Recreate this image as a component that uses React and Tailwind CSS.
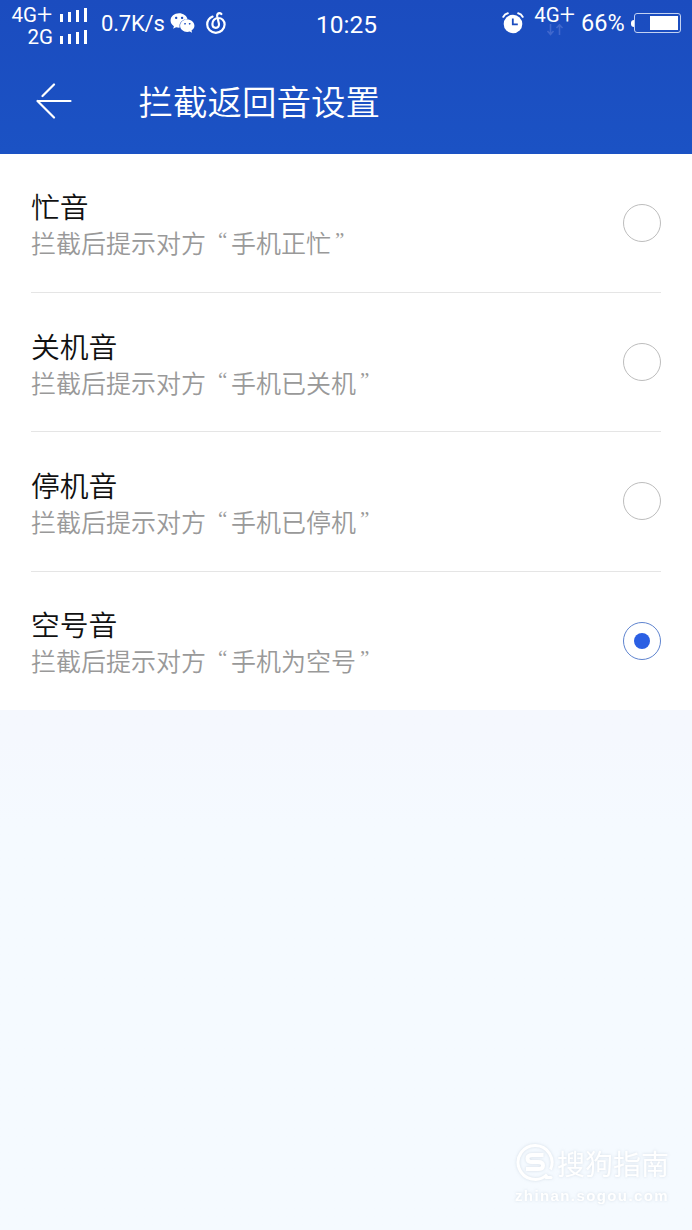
import React, { useState } from "react";
import { FaWeixin } from "react-icons/fa";

const options = [
    { id: "busy", name: "忙音", tone: "手机正忙" },
    { id: "off", name: "关机音", tone: "手机已关机" },
    { id: "stopped", name: "停机音", tone: "手机已停机" },
    { id: "empty", name: "空号音", tone: "手机为空号" },
];

function SignalBars() {
    return (
        <div className="flex h-[14px] items-end gap-[5px]">
            <span className="h-2 w-[3px] bg-white" />
            <span className="h-[10px] w-[3px] bg-white" />
            <span className="h-3 w-[3px] bg-white" />
            <span className="h-[14px] w-[3px] bg-white" />
        </div>
    );
}

function NetworkType() {
    return (
        <span className="flex h-5 items-center text-[20.5px] leading-5">
            4G<span className="w-4 text-[27px] leading-5 font-light">+</span>
        </span>
    );
}

function MusicIcon() {
    return (
        <svg className="h-[22px] w-5" viewBox="0 0 20 22" fill="none" stroke="#fff" strokeWidth="2.2" strokeLinecap="round">
            <path d="M6.6 4.6C2.8 6.4 1.2 9.6 1.2 12.4C1.2 17 5 20.8 9.8 20.8S18.6 17 18.6 12.6C18.6 8.6 15.6 6 12.4 6C8.8 6 6.4 8.8 6.4 12C6.4 14.4 7.8 15.8 9.8 15.8C12.2 15.8 13.4 13.8 12.9 11.6L11.2 4.4C10.8 2.2 12 1.2 13.4 1.2Q14.6 1.2 15.4 2" />
        </svg>
    );
}

function AlarmIcon() {
    return (
        <svg className="h-[22px] w-[22px]" viewBox="0 0 22 22" fill="none">
            <circle cx="11" cy="12" r="9.3" fill="#fff" />
            <path d="M1.3 4.8Q2.6 2 5.8 1.3M20.7 4.8Q19.4 2 16.2 1.3" stroke="#fff" strokeWidth="2" strokeLinecap="round" />
            <path d="M10.8 6.5V12.4H15.8" stroke="#1b4cbf" strokeWidth="1.8" />
        </svg>
    );
}

function Battery() {
    return (
        <div className="flex items-center">
            <span className="h-[7px] w-[3px] rounded-l-sm bg-white" />
            <div className="flex h-5 w-[47px] justify-end rounded-[3px] border border-[#c3d2f2] p-[2px]">
                <span className="h-full w-[28px] bg-white" />
            </div>
        </div>
    );
}

function StatusBar() {
    return (
        <div className="flex h-12 font-[Roboto,sans-serif] leading-none text-white">
            <div className="flex w-[87px] flex-col items-end pt-1">
                <div className="flex h-[22px] items-center gap-[7px]">
                    <NetworkType />
                    <SignalBars />
                </div>
                <div className="flex h-[22px] items-center gap-[7px] text-[20.5px]">
                    <span>2G</span>
                    <SignalBars />
                </div>
            </div>
            <span className="ml-[14px] w-[69px] pt-[13px] text-[22px] tracking-[-0.2px]">0.7K/s</span>
            <FaWeixin className="mt-[10px] h-[26px] w-[25px]" />
            <div className="ml-[11px] w-[21px] pt-[12px]">
                <MusicIcon />
            </div>
            <span className="ml-[89px] w-[70px] pt-[13px] text-[24.5px]">10:25</span>
            <div className="ml-[116px] pt-[12px]">
                <AlarmIcon />
            </div>
            <div className="ml-[9px] flex w-[44px] flex-col items-center pt-[5px]">
                <NetworkType />
                <svg className="-mt-px h-3 w-[18px]" viewBox="0 0 18 12" fill="none" stroke="#4067cc" strokeWidth="1.6">
                    <path d="M4.5 0V10M1.5 7L4.5 10.5L7.5 7M13.5 11V1M10.5 4L13.5 .8L16.5 4" />
                </svg>
            </div>
            <span className="ml-[4px] w-[50px] pt-[12px] text-[23.5px]">66%</span>
            <div className="pt-[13px]">
                <Battery />
            </div>
        </div>
    );
}

function OptionRow({ option, checked, last, onSelect }) {
    return (
        <button
            type="button"
            onClick={() => onSelect(option.id)}
            className={`flex w-full items-center justify-between text-left ${
                last ? "h-[138.5px]" : "h-[139.4px] border-b border-[#e5e5e5]"
            }`}
        >
            <div className="pt-px">
                <div className="text-[28.8px] leading-[38px] font-[350] text-[#111]">{option.name}</div>
                <div className="flex text-[25px] leading-[34px] font-[350] text-[#999]">
                    <span>拦截后提示对方</span>
                    <span className="w-[25px] pl-3 font-['Liberation_Serif',serif] text-[21px] leading-[30px]">“</span>
                    <span>{option.tone}</span>
                    <span className="w-[25px] pl-1 font-['Liberation_Serif',serif] text-[21px] leading-[30px]">”</span>
                </div>
            </div>
            <span
                className={`flex h-[38px] w-[38px] items-center justify-center rounded-full border-[1.5px] ${
                    checked ? "border-[#5f84cf]" : "border-[#bdbdbd]"
                }`}
            >
                {checked && <span className="h-4 w-4 rounded-full bg-[#2b5fe3]" />}
            </span>
        </button>
    );
}

export default function App() {
    const [selected, setSelected] = useState("empty");

    return (
        <div className="flex h-[1230px] w-[692px] flex-col overflow-hidden bg-linear-to-b from-[#f5f8fe] from-60% to-[#f5faff] to-67% font-['Noto_Sans_CJK_SC',sans-serif]">
            <header className="h-[153.5px] bg-linear-to-b from-[#1b4cbf] to-[#1b52c4] text-white">
                <StatusBar />
                <div className="flex h-[106px] items-center pl-[35.5px]">
                    <svg className="h-9 w-9" viewBox="0 0 36 36" fill="none" stroke="#fff" strokeWidth="2.2" strokeLinecap="round">
                        <path d="M1.5 18H34.5M18 1.5L6.5 13M1.5 18L18 34.5" />
                    </svg>
                    <h1 className="ml-[67px] pb-[2px] text-[34.5px] leading-[50px] font-[350]">拦截返回音设置</h1>
                </div>
            </header>

            <main className="bg-white px-[31px]">
                {options.map((option, i) => (
                    <OptionRow
                        key={option.id}
                        option={option}
                        checked={selected === option.id}
                        last={i === options.length - 1}
                        onSelect={setSelected}
                    />
                ))}
            </main>

            {/* 水印 */}
            <footer className="mt-auto mr-[23px] mb-[24px] flex flex-col items-end text-white drop-shadow-[0_0_1.5px_rgba(120,140,160,0.25)]">
                <div className="flex items-center gap-[2px]">
                    <svg className="h-[39px] w-[39px]" viewBox="0 0 39 39" fill="none" stroke="#fff">
                        <path d="M31 31.5A17 17 0 1 1 34.5 26.5" strokeWidth="3" />
                        <path d="M30 34.5L35 34.5" strokeWidth="3" strokeLinecap="round" />
                        <path d="M27.5 12H16.5Q11.5 12 11.5 15.5T16.5 19H22Q27 19 27 22.5T22 26H10" strokeWidth="4" />
                    </svg>
                    <span className="text-[28px] leading-9">搜狗指南</span>
                </div>
                <span className="mt-1 font-['Liberation_Sans',sans-serif] text-[15px] leading-5 font-bold tracking-[1.4px]">
                    zhinan.sogou.com
                </span>
            </footer>
        </div>
    );
}
